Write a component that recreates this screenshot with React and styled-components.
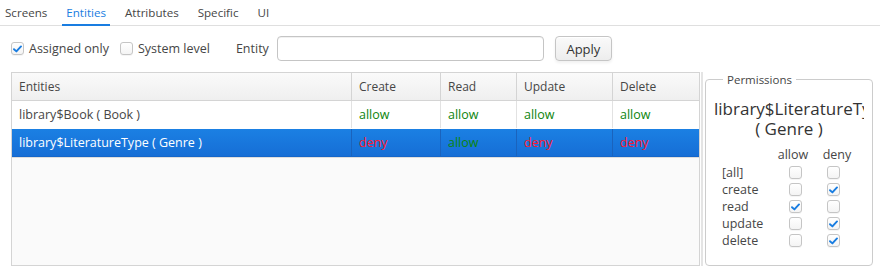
import React from "react";
import styled, { createGlobalStyle } from "styled-components";

const GlobalStyle = createGlobalStyle`
  body {
    margin: 0;
    background: #fff;
    font-family: "Open Sans", "Liberation Sans", sans-serif;
    color: #464646;
  }
`;

const rows = [
  { name: "library$Book ( Book )", perms: ["allow", "allow", "allow", "allow"] },
  {
    name: "library$LiteratureType ( Genre )",
    perms: ["deny", "allow", "deny", "deny"],
    selected: true,
  },
];

const permissionRows = [
  { label: "[all]", allow: false, deny: false },
  { label: "create", allow: false, deny: true },
  { label: "read", allow: true, deny: false },
  { label: "update", allow: false, deny: true },
  { label: "delete", allow: false, deny: true },
];

const Check = ({ checked }) => (
  <Box>
    {checked && (
      <svg width="9" height="8" viewBox="0 0 9 8">
        <path
          d="M1 4.2 L3.4 6.4 L8 1.4"
          fill="none"
          stroke="#197de1"
          strokeWidth="1.9"
          strokeLinecap="round"
          strokeLinejoin="round"
        />
      </svg>
    )}
  </Box>
);

const App = () => {
  return (
    <Page>
      <GlobalStyle />
      <TabBar>
        {["Screens", "Entities", "Attributes", "Specific", "UI"].map((t) => (
          <Tab key={t} $active={t === "Entities"}>
            {t}
          </Tab>
        ))}
      </TabBar>

      <FilterRow>
        <CheckLabel>
          <Check checked />
          Assigned only
        </CheckLabel>
        <CheckLabel>
          <Check />
          System level
        </CheckLabel>
        <FieldCaption>Entity</FieldCaption>
        <TextInput />
        <Button>Apply</Button>
      </FilterRow>

      <Main>
        <Table>
          <HeaderRow>
            <HeadCell>Entities</HeadCell>
            <HeadCell>Create</HeadCell>
            <HeadCell>Read</HeadCell>
            <HeadCell>Update</HeadCell>
            <HeadCell>Delete</HeadCell>
          </HeaderRow>
          {rows.map((r) => (
            <BodyRow key={r.name} $selected={r.selected}>
              <Cell $selected={r.selected}>{r.name}</Cell>
              {r.perms.map((p, i) => (
                <Cell key={i} $selected={r.selected} $perm={p}>
                  {p}
                </Cell>
              ))}
            </BodyRow>
          ))}
          <EmptyArea />
        </Table>

        <Splitter />

        <Panel>
          <Legend>Permissions</Legend>
          <PanelTitle>
            <TitleLine>library$LiteratureType</TitleLine>
            <TitleLine>( Genre )</TitleLine>
          </PanelTitle>
          <PermGrid>
            <span />
            <ColHead>allow</ColHead>
            <ColHead $shift>deny</ColHead>
            {permissionRows.map((p) => (
              <React.Fragment key={p.label}>
                <PermLabel>{p.label}</PermLabel>
                <PermCell>
                  <Check checked={p.allow} />
                </PermCell>
                <PermCell>
                  <Check checked={p.deny} />
                </PermCell>
              </React.Fragment>
            ))}
          </PermGrid>
        </Panel>
      </Main>
    </Page>
  );
};

const Page = styled.div`
  width: 880px;
  height: 270px;
  display: flex;
  flex-direction: column;
  overflow: hidden;
`;

const TabBar = styled.div`
  display: flex;
  height: 25px;
  border-bottom: 1px solid #dfdfdf;
  padding-left: 1px;
  font-size: 11.6px;
`;

const Tab = styled.div`
  padding: 0 4px;
  margin-right: 11px;
  display: flex;
  align-items: center;
  color: ${(p) => (p.$active ? "#197de1" : "#464646")};
  border-bottom: 2px solid ${(p) => (p.$active ? "#197de1" : "transparent")};
  margin-bottom: -1px;
`;

const FilterRow = styled.div`
  display: flex;
  align-items: center;
  height: 25px;
  margin-top: 10px;
  padding-left: 11px;
  font-size: 12.5px;
`;

const CheckLabel = styled.label`
  display: flex;
  align-items: center;
  gap: 5px;
  margin-right: 11px;
  color: #464646;
`;

const Box = styled.span`
  width: 13px;
  height: 13px;
  box-sizing: border-box;
  border: 1px solid #c5c5c5;
  border-radius: 3px;
  background: linear-gradient(#fff, #f4f4f4);
  box-shadow: 0 1px 0 rgba(0, 0, 0, 0.04);
  display: inline-flex;
  align-items: center;
  justify-content: center;
`;

const FieldCaption = styled.span`
  margin-left: 15px;
  margin-right: 8px;
`;

const TextInput = styled.div`
  width: 267px;
  height: 25px;
  box-sizing: border-box;
  border: 1px solid #c5c5c5;
  border-radius: 4px;
  background: #fff;
  box-shadow: inset 0 1px 0 #f1f1f1;
`;

const Button = styled.button`
  margin-left: 11px;
  width: 57px;
  height: 25px;
  box-sizing: border-box;
  border: 1px solid #c5c5c5;
  border-radius: 4px;
  background: linear-gradient(#fafafa, #ededed);
  box-shadow: inset 0 1px 0 #fff, 0 2px 3px rgba(0, 0, 0, 0.06);
  font-family: inherit;
  font-size: 13px;
  color: #333;
  padding: 0;
`;

const Main = styled.div`
  display: flex;
  margin-top: 11px;
  padding-left: 11px;
  height: 194px;
`;

const Table = styled.div`
  width: 689px;
  box-sizing: border-box;
  border: 1px solid #d4d4d4;
  display: flex;
  flex-direction: column;
  font-size: 12.5px;
`;

const gridCols = "339px 89px 76px 96px 1fr";

const HeaderRow = styled.div`
  display: grid;
  grid-template-columns: ${gridCols};
  height: 27px;
  background: linear-gradient(#fafafa, #efefef);
  border-bottom: 1px solid #d4d4d4;
`;

const HeadCell = styled.div`
  display: flex;
  align-items: center;
  padding-left: 7px;
  font-size: 12px;
  color: #464646;
  border-left: 1px solid #d4d4d4;
  &:first-child {
    border-left: none;
  }
`;

const BodyRow = styled.div`
  display: grid;
  grid-template-columns: ${gridCols};
  height: 27px;
  background: ${(p) =>
    p.$selected ? "linear-gradient(#1b80e3, #166ed6)" : "#fff"};
  border-bottom: 1px solid ${(p) => (p.$selected ? "#1566c9" : "#fff")};
`;

const Cell = styled.div`
  display: flex;
  align-items: center;
  padding-left: 7px;
  white-space: nowrap;
  border-left: 1px solid ${(p) => (p.$selected ? "#1a63bd" : "#e2e2e2")};
  color: ${(p) =>
    p.$perm === "allow"
      ? "#0c850c"
      : p.$perm === "deny"
      ? "#ff1a2e"
      : p.$selected
      ? "#fff"
      : "#464646"};
  &:first-child {
    border-left: none;
  }
`;

const EmptyArea = styled.div`
  flex: 1;
  background: #fafafa;
  border-top: 1px solid #ddd;
`;

const Splitter = styled.div`
  width: 2px;
  margin: 0 2px 0 1px;
  background: #e4e4e4;
`;

const Panel = styled.fieldset`
  margin: 0;
  padding: 0 8px;
  width: 168px;
  box-sizing: border-box;
  border: 1px solid #ccc;
  border-radius: 4px;
  min-width: 0;
  overflow: hidden;
`;

const Legend = styled.legend`
  font-size: 11.5px;
  color: #464646;
  padding: 0 4px;
  margin-left: 9px;
`;

const PanelTitle = styled.div`
  margin-top: 12px;
  font-size: 17px;
  line-height: 20px;
  color: #333;
  text-align: center;
  overflow: hidden;
`;

const TitleLine = styled.div`
  white-space: nowrap;
  overflow: hidden;
`;

const PermGrid = styled.div`
  display: grid;
  grid-template-columns: 55px 36px 40px;
  grid-auto-rows: 17px;
  margin-top: 8px;
  padding-left: 8px;
  font-size: 12.5px;
  color: #464646;
`;

const ColHead = styled.div`
  text-align: center;
  line-height: 15px;
  transform: translateX(${(p) => (p.$shift ? "4px" : "-2px")});
`;

const PermLabel = styled.div`
  line-height: 17px;
`;

const PermCell = styled.div`
  display: flex;
  align-items: center;
  justify-content: center;
`;

export default App;
